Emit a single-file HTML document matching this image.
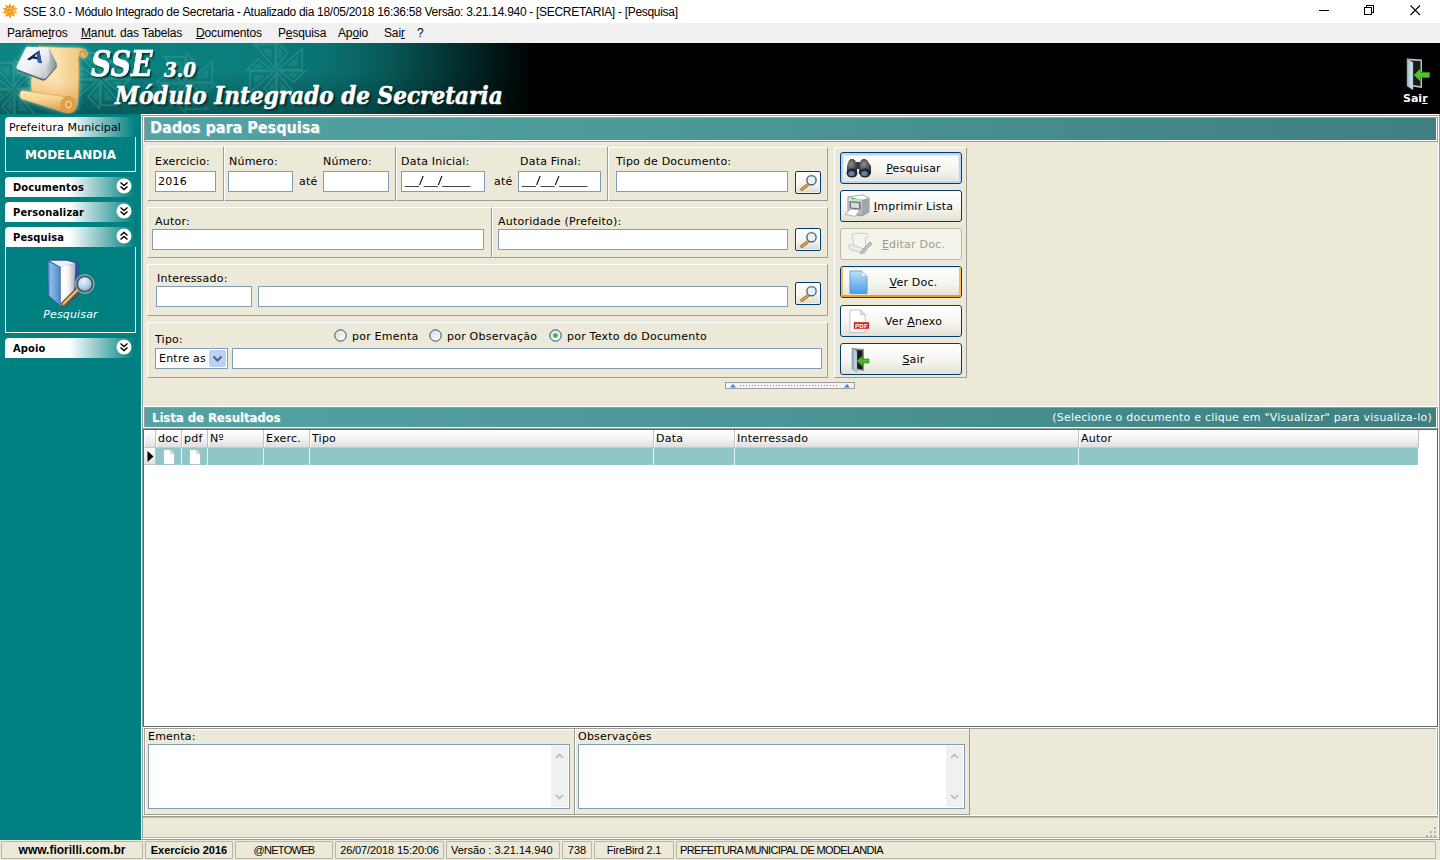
<!DOCTYPE html>
<html lang="pt-BR">
<head>
<meta charset="utf-8">
<title>SSE 3.0 - Módulo Integrado de Secretaria</title>
<style>
*{box-sizing:border-box;margin:0;padding:0}
html,body{width:1440px;height:860px;overflow:hidden;background:#fff}
body{position:relative;font-family:"DejaVu Sans","Liberation Sans",sans-serif;font-size:11px;color:#000}
.abs,.abs>*{position:absolute}
#app{position:absolute;left:0;top:0;width:1440px;height:860px;overflow:hidden}
#app div,#app span,#app svg,#app u{position:absolute;white-space:pre}
#app u{position:static;text-decoration:underline;text-underline-offset:1px}
/* title bar */
#titlebar{left:0;top:0;width:1440px;height:23px;background:#fff}
#titletext{left:23px;top:5px;font:12px/15px "Liberation Sans",sans-serif;letter-spacing:-.3px;color:#000}
/* menu */
#menubar{left:0;top:23px;width:1440px;height:20px;background:#f0f0f0}
#menubar span{top:3px;font:12px/15px "Liberation Sans",sans-serif;letter-spacing:-.15px}
/* header */
#header{left:0;top:43px;width:1440px;height:71px;background:linear-gradient(180deg,rgba(0,0,0,0) 40%,rgba(0,0,0,.3) 100%),linear-gradient(90deg,#0c8583 0px,#0a7e7c 240px,#0a7270 325px,#085a59 385px,#053a3a 438px,#021b1b 488px,#000 535px)}
.hshadow{text-shadow:2px 2px 2px rgba(0,30,30,.85)}
/* sidebar */
#sidebar{left:0;top:114px;width:141px;height:726px;background:#008080}
.sbh{left:5px;width:131px;height:20px;border-radius:4px 0 0 0;background:linear-gradient(90deg,#fff 0,#fff 64px,#008080 130px);font:bold 11px/20px "DejaVu Sans Condensed","DejaVu Sans",sans-serif}
.sbh b{position:absolute;left:8px;top:1px;font-weight:bold;letter-spacing:.15px}
.sbb{left:5px;width:131px;border:1px solid #fff;border-top:none;background:#008080}
/* main */
#main{left:141px;top:114px;width:1299px;height:726px;background:#ece9d8}
.bar{background:linear-gradient(90deg,#53a3a3 0,#4c9999 40%,#3f7f7f 100%);color:#fff}
.grp{border:1px solid;border-color:#fff #9c9c98 #9c9c98 #fff}
.vsep{width:2px;border-left:1px solid #9c9c98;border-right:1px solid #fff}
.in{background:#fff;border:1px solid #7f9db9;height:21px}
.lbl{font-size:11px;line-height:14px;letter-spacing:.22px}
.sbtn{width:26px;height:23px;border:1px solid #003c74;border-radius:2px;background:linear-gradient(#fff,#f4f3ee 60%,#dcd9cc);box-shadow:inset 0 0 0 1px rgba(255,255,255,.6)}
.btn{left:699px;width:122px;height:32px;border:1px solid #003c74;border-radius:3px;background:linear-gradient(#fff 0,#f6f5f0 55%,#e3e0d3 100%);font-size:11px;line-height:32px;letter-spacing:.22px}
.btn .t{left:0;top:0;height:30px}
/* status */
#status{left:0;top:840px;width:1440px;height:20px;background:#ece9d8}
.sp{top:1px;height:18px;border:1px solid #b9b6a6;border-radius:1px;font:11px/16px "Liberation Sans",sans-serif;text-align:center}
</style>
</head>
<body>
<div id="app">

<!-- TITLE BAR -->
<div id="titlebar">
  <svg id="appicon" style="left:2px;top:3px" width="16" height="16" viewBox="0 0 16 16"><path d="M8 .3l1.300 3.100 3.300-2-.7 3.500 3.800.2-2.900 2.400 2.800 2.300-3.600.5.900 3.500-3.200-1.700L8 15.700l-1.500-3.300-3.300 1.600.8-3.500-3.600-.5 2.800-2.400L.4 5.300l3.600-.4-.8-3.500 3.200 1.800z" fill="#f39c12"/><g fill="#fff" opacity=".85"><circle cx="5.800" cy="5.600" r=".7"/><circle cx="8.600" cy="5.200" r=".6"/><circle cx="4.600" cy="8" r=".6"/><circle cx="7.600" cy="8.600" r=".8"/><circle cx="5.200" cy="10.600" r=".6"/><circle cx="8.200" cy="11.400" r=".5"/></g><path d="M9.500 6.500l4.500-3-1.200 4.800 1.800 1.500-3.500 1.200z" fill="#f8b552"/></svg>
  <span id="titletext">SSE 3.0 - Módulo Integrado de Secretaria - Atualizado dia 18/05/2018 16:36:58 Versão: 3.21.14.940 - [SECRETARIA] - [Pesquisa]</span>
  <svg style="left:1300px;top:0" width="140" height="23" viewBox="0 0 140 23"><g stroke="#000" stroke-width="1" fill="none" shape-rendering="crispEdges"><path d="M19 10.500h10"/><path d="M64.500 7.500h7v7h-7z"/><path d="M66.500 7.500v-2h7v7h-2"/></g><path d="M110.500 5.500l9.500 9.500M120 5.500l-9.500 9.500" stroke="#000" stroke-width="1.100" fill="none"/></svg>
</div>

<!-- MENU BAR -->
<div id="menubar">
  <span style="left:7px">Parâme<u>t</u>ros</span>
  <span style="left:81px"><u>M</u>anut. das Tabelas</span>
  <span style="left:196px"><u>D</u>ocumentos</span>
  <span style="left:278px">P<u>e</u>squisa</span>
  <span style="left:338px">Ap<u>o</u>io</span>
  <span style="left:384px">Sai<u>r</u></span>
  <span style="left:417px">?</span>
</div>

<!-- HEADER -->
<div id="header">
  <svg id="orn" style="left:0;top:0" width="620" height="71" viewBox="0 0 620 71">
    <defs><g id="star"><path d="M-0.8 -1.8L-0.8 -26.1L-21.5 -26.1z" fill="none" stroke="#a5ebe4" stroke-width="1.700"/><path d="M-4.4 -10.4L-4.4 -21.8L-14.1 -21.8z" fill="#a5ebe4" opacity=".7"/><path d="M-29.6 -0.4L-17.9 -11.7L-3.5 -0.4z" fill="none" stroke="#a5ebe4" stroke-width="1.700"/><path d="M-22.9 -2.4L-17.4 -7.7L-10.7 -2.4z" fill="#a5ebe4" opacity=".7"/><path d="M1.8 -0.8L26.1 -0.8L26.1 -21.5z" fill="none" stroke="#a5ebe4" stroke-width="1.700"/><path d="M10.4 -4.4L21.8 -4.4L21.8 -14.1z" fill="#a5ebe4" opacity=".7"/><path d="M0.4 -29.6L11.7 -17.9L0.4 -3.5z" fill="none" stroke="#a5ebe4" stroke-width="1.700"/><path d="M2.4 -22.9L7.7 -17.4L2.4 -10.7z" fill="#a5ebe4" opacity=".7"/><path d="M0.8 1.8L0.8 26.1L21.5 26.1z" fill="none" stroke="#a5ebe4" stroke-width="1.700"/><path d="M4.4 10.4L4.4 21.8L14.1 21.8z" fill="#a5ebe4" opacity=".7"/><path d="M29.6 0.4L17.9 11.7L3.5 0.4z" fill="none" stroke="#a5ebe4" stroke-width="1.700"/><path d="M22.9 2.4L17.4 7.7L10.7 2.4z" fill="#a5ebe4" opacity=".7"/><path d="M-1.8 0.8L-26.1 0.8L-26.1 21.5z" fill="none" stroke="#a5ebe4" stroke-width="1.700"/><path d="M-10.4 4.4L-21.8 4.4L-21.8 14.1z" fill="#a5ebe4" opacity=".7"/><path d="M-0.4 29.6L-11.7 17.9L-0.4 3.5z" fill="none" stroke="#a5ebe4" stroke-width="1.700"/><path d="M-2.4 22.9L-7.7 17.4L-2.4 10.7z" fill="#a5ebe4" opacity=".7"/></g></defs>
    <use href="#star" x="14" y="46" opacity=".16"/>
    <use href="#star" x="100" y="36" opacity=".17"/>
    <use href="#star" x="186" y="40" opacity=".13"/>
    <use href="#star" x="276" y="27.500" opacity=".15"/>
  </svg>
  <svg id="logo" style="left:0;top:0;filter:drop-shadow(0 0 2.500px rgba(190,255,245,.55))" width="100" height="71" viewBox="0 0 100 71">
    <defs>
      <linearGradient id="pg" x1="0" y1="0" x2="1" y2="0"><stop offset="0" stop-color="#f7d79c"/><stop offset=".45" stop-color="#fbe2b0"/><stop offset=".8" stop-color="#f4cb88"/><stop offset="1" stop-color="#e4ab5c"/></linearGradient>
      <linearGradient id="pgb" x1="0" y1="0" x2="0" y2="1"><stop offset="0" stop-color="#f0b86a" stop-opacity="0"/><stop offset=".6" stop-color="#eeb162" stop-opacity="0"/><stop offset="1" stop-color="#e39a45" stop-opacity=".75"/></linearGradient>
      <linearGradient id="pg2" x1="0" y1="0" x2=".25" y2="1"><stop offset="0" stop-color="#fdeabc"/><stop offset=".5" stop-color="#f8d08c"/><stop offset="1" stop-color="#dca052"/></linearGradient>
      <linearGradient id="kg" x1="0" y1="0" x2="1" y2=".8"><stop offset="0" stop-color="#ffffff"/><stop offset=".5" stop-color="#eef1f6"/><stop offset=".8" stop-color="#cfd4dc"/><stop offset="1" stop-color="#8f959e"/></linearGradient>
      <linearGradient id="kg2" x1="0" y1="0" x2="1" y2="0"><stop offset="0" stop-color="#d9dde3"/><stop offset="1" stop-color="#777d86"/></linearGradient>
    </defs>
    <!-- sheet -->
    <path d="M38 3.500L78 5C84 5 89 8 87.500 12.500C86 16 81 15.500 80 12L78.500 14C79.500 28 79 44 77.500 62L31.500 48C30.500 41 31 34 32 26z" fill="url(#pg)" stroke="#d6a55c" stroke-width=".7"/>
    <path d="M38 3.500L78 5C84 5 89 8 87.500 12.500C86 16 81 15.500 80 12L78.500 14C79.500 28 79 44 77.500 62L31.500 48C30.500 41 31 34 32 26z" fill="url(#pgb)"/>
    <path d="M80 12c-.6-2.600 1.500-4.300 3.800-3.700c2 .6 2.400 3 .8 4.200" fill="none" stroke="#d08e38" stroke-width="1.300"/>
    <!-- roll -->
    <path d="M22.500 47.500C19.500 48 18.800 54 21.500 56L65 69.500C72 71.500 77.500 67 77 61C76.600 57 73 54.800 69 54.300z" fill="url(#pg2)" stroke="#d6a55c" stroke-width=".7"/>
    <ellipse cx="68.500" cy="61.500" rx="7.300" ry="7.800" fill="#e8a850" stroke="#c98632" stroke-width=".8"/>
    <ellipse cx="68.500" cy="61.500" rx="4.600" ry="5" fill="#f2c47c" stroke="#d08e38" stroke-width="1.100"/>
    <ellipse cx="68.500" cy="61.500" rx="1.800" ry="2" fill="#d8943c"/>
    <!-- key -->
    <path d="M28 5.500L47 6.500C48.500 6.600 49.300 7.200 50 8.500L56.500 21.500C57.200 23 57 24 56 25.300L46 36.500C45 37.600 43.800 37.900 42.300 37.400L18.500 28.500C16.500 27.700 16 26 17 24.300L25.500 7C26 6 26.800 5.500 28 5.500z" fill="#5d636b"/>
    <path d="M28 3.800L47 4.800C48.500 4.900 49.300 5.500 50 6.800L56.500 19.800C57.200 21.300 57 22.300 56 23.600L46 34.800C45 35.900 43.800 36.200 42.300 35.700L18.500 26.800C16.500 26 16 24.300 17 22.600L25.500 5.300C26 4.300 26.800 3.800 28 3.800z" fill="url(#kg)"/>
    <path d="M48.500 5.500C49.200 5.800 49.600 6.200 50 6.800L56.500 19.800C57.200 21.300 57 22.300 56 23.600L46 34.800C45.500 35.300 45 35.600 44.500 35.800C44 32 45.500 24 49 19.500C50 15 49.500 9 48.500 5.500z" fill="url(#kg2)" opacity=".85"/>
    <path d="M26.800 16.500L39.300 7.200L41.800 20.300L38 19.300L37.500 16.300L32.300 15.600L30 17.300zM34.500 13.600L37.200 14L36.600 10.800z" fill="#151d40"/>
    <path d="M39.300 7.200L41.800 20.300L38 19.300L37.500 16.300L37.200 14L36.600 10.800z" fill="#2f56b0"/>
  </svg>
  <span class="hshadow" id="h1" style="left:91px;top:-2px;-webkit-text-stroke:.7px #fff;font:italic bold 36px/44px 'DejaVu Serif Condensed','DejaVu Serif','Liberation Serif',serif;color:#fff;transform:scaleX(.87);transform-origin:0 0">SSE</span>
  <span class="hshadow" id="h2" style="left:164px;top:14px;-webkit-text-stroke:.5px #fff;font:italic bold 20.500px/26px 'DejaVu Serif Condensed','DejaVu Serif','Liberation Serif',serif;color:#fff">3.0</span>
  <span class="hshadow" id="h3" style="left:115px;top:38px;-webkit-text-stroke:.5px #fff;font:italic bold 24px/30px 'DejaVu Serif Condensed','DejaVu Serif','Liberation Serif',serif;color:#fff">Módulo Integrado de Secretaria</span>
  <svg id="door" style="left:1403px;top:14px" width="30" height="34" viewBox="0 0 30 34">
    <defs><linearGradient id="dg" x1="0" y1="0" x2="1" y2="0"><stop offset="0" stop-color="#9db8cc"/><stop offset="1" stop-color="#dfe9f0"/></linearGradient></defs>
    <path d="M4 1.500L19 2.500V31L4 29z" fill="#b9bec2"/>
    <path d="M6 3.500L17.500 4V29L6 27.500z" fill="#1a1a1a"/>
    <path d="M4 1.500L10 5.500V33L4 29z" fill="url(#dg)" stroke="#6f879a" stroke-width=".6"/>
    <path d="M11 18L17.500 11.500V15.500H26.500V20.500H17.500V24.500z" fill="#4fc32a" stroke="#2f8f17" stroke-width=".8"/>
  </svg>
  <span id="hsair" style="left:1403px;top:49px;font:bold 11px/14px 'DejaVu Sans',sans-serif;color:#fff">Sai<u>r</u></span>
</div>

<!-- SIDEBAR -->
<div id="sidebar">
  <div class="sbh" style="top:3px;font-weight:normal;font-family:'DejaVu Sans',sans-serif"><b style="left:4px;font-weight:normal;letter-spacing:.12px">Prefeitura Municipal</b></div>
  <div class="sbb" style="top:23px;height:35px"><span style="left:0;top:0;width:129px;text-align:center;font:bold 12px/36px 'DejaVu Sans',sans-serif;color:#fff">MODELANDIA</span></div>
  <div class="sbh" style="top:63px"><b>Documentos</b><svg style="left:110.500px;top:1px" width="16" height="16" viewBox="0 0 16 16"><circle cx="8" cy="8" r="7.500" fill="#fff"/><path d="M4.500 4.500L8 7.500L11.500 4.500M4.500 8.500L8 11.500L11.500 8.500" fill="none" stroke="#000" stroke-width="1.400"/></svg></div>
  <div class="sbh" style="top:88px"><b>Personalizar</b><svg style="left:110.500px;top:1px" width="16" height="16" viewBox="0 0 16 16"><circle cx="8" cy="8" r="7.500" fill="#fff"/><path d="M4.500 4.500L8 7.500L11.500 4.500M4.500 8.500L8 11.500L11.500 8.500" fill="none" stroke="#000" stroke-width="1.400"/></svg></div>
  <div class="sbh" style="top:113px"><b>Pesquisa</b><svg style="left:110.500px;top:1px" width="16" height="16" viewBox="0 0 16 16"><circle cx="8" cy="8" r="7.500" fill="#fff"/><path d="M4.500 7.500L8 4.500L11.500 7.500M4.500 11.500L8 8.500L11.500 11.500" fill="none" stroke="#000" stroke-width="1.400"/></svg></div>
  <div class="sbb" style="top:133px;height:86px">
    <svg id="bookicon" style="left:40px;top:12px" width="52" height="50" viewBox="0 0 52 50">
      <defs>
        <linearGradient id="bk1" x1="0" y1="0" x2="1" y2="0"><stop offset="0" stop-color="#3d74b6"/><stop offset=".25" stop-color="#8dbbe8"/><stop offset="1" stop-color="#4f88c6"/></linearGradient>
        <linearGradient id="bk2" x1="0" y1="0" x2="1" y2="0"><stop offset="0" stop-color="#ffffff"/><stop offset=".55" stop-color="#f1f2f4"/><stop offset="1" stop-color="#a9adb3"/></linearGradient>
        <radialGradient id="lens" cx=".4" cy=".3" r=".75"><stop offset="0" stop-color="#eaf7fd"/><stop offset=".6" stop-color="#a7d2ea"/><stop offset="1" stop-color="#5d9cc4"/></radialGradient>
      </defs>
      <path d="M2.400 .5L22 .3L33.800 3.600L32.500 37.500L14 47L2.400 36z" fill="#27579a"/>
      <path d="M3.500 1.800L21 1.800L29.400 4.200L14.300 8z" fill="#eef2f7"/>
      <path d="M14.300 8L29.400 4.200L28 36.500L14.300 47z" fill="url(#bk2)"/>
      <path d="M14.300 8L21 6.300L20.300 43L14.300 47z" fill="#fff"/>
      <path d="M1.500 1.700L14.300 8L14.300 47L2.400 36.300z" fill="url(#bk1)" stroke="#2a5c9e" stroke-width=".7"/>
      <path d="M17.400 45L31.500 31" stroke="#6b4414" stroke-width="5.200" stroke-linecap="round"/>
      <path d="M17.400 45L31.500 31" stroke="#dba450" stroke-width="3" stroke-linecap="round"/>
      <path d="M18 44L31 31" stroke="#f4d9a0" stroke-width=".9" stroke-linecap="round"/>
      <circle cx="38.800" cy="25" r="7.900" fill="url(#lens)" stroke="#565b61" stroke-width="2.300"/>
      <circle cx="38.800" cy="25" r="9.300" fill="none" stroke="#c8ccd0" stroke-width=".9"/>
    </svg>
    <span style="left:0;top:61px;width:129px;text-align:center;font:italic 11px/14px 'DejaVu Sans',sans-serif;color:#fff;letter-spacing:.15px">Pesquisar</span>
  </div>
  <div class="sbh" style="top:224px"><b>Apoio</b><svg style="left:110.500px;top:1px" width="16" height="16" viewBox="0 0 16 16"><circle cx="8" cy="8" r="7.500" fill="#fff"/><path d="M4.500 4.500L8 7.500L11.500 4.500M4.500 8.500L8 11.500L11.500 8.500" fill="none" stroke="#000" stroke-width="1.400"/></svg></div>
</div>

<!-- MAIN -->
<div id="main">
  <!--MAIN-START-->
  <div style="left:0px;top:0px;width:1299px;height:1px;background:#fff"></div>
  <div style="left:1px;top:1px;width:1297px;height:1px;background:#9c9c9c"></div>
  <div style="left:0px;top:0px;width:1px;height:726px;background:#fff"></div>
  <div style="left:1px;top:1px;width:1px;height:724px;background:#9c9c9c"></div>
  <div style="left:1297px;top:2px;width:1px;height:723px;background:#fff"></div>
  <div style="left:1298px;top:0px;width:1px;height:726px;background:#9c9c9c"></div>
  <div style="left:2px;top:2px;width:1295px;height:1px;background:#fff"></div>
  <div style="left:3px;top:3px;width:1293px;height:1px;background:#9c9c9c"></div>
  <div style="left:2px;top:2px;width:1px;height:26px;background:#fff"></div>
  <div style="left:3px;top:3px;width:1px;height:24px;background:#9c9c9c"></div>
  <div style="left:1295px;top:4px;width:1px;height:23px;background:#fff"></div>
  <div style="left:1296px;top:3px;width:1px;height:25px;background:#9c9c9c"></div>
  <div style="left:4px;top:26px;width:1292px;height:1px;background:#fff"></div>
  <div style="left:3px;top:27px;width:1294px;height:1px;background:#9c9c9c"></div>
  <div class="bar" style="left:4px;top:4px;width:1291px;height:22px;"><span style="left:5px;top:-1px;font:bold 16px/21px 'DejaVu Sans Condensed','DejaVu Sans',sans-serif;color:#fff;text-shadow:1px 1px 0 rgba(255,255,255,.25)">Dados para Pesquisa</span></div>
  <div class="grp" style="left:6px;top:32px;width:77px;height:55px;"></div>
  <div class="grp" style="left:83px;top:32px;width:172px;height:55px;"></div>
  <div class="grp" style="left:255px;top:32px;width:212px;height:55px;"></div>
  <div class="grp" style="left:467px;top:33px;width:220px;height:54px;"></div>
  <div class="grp" style="left:6px;top:93px;width:345px;height:51px;"></div>
  <div class="grp" style="left:351px;top:93px;width:336px;height:51px;"></div>
  <div class="grp" style="left:6px;top:150px;width:681px;height:52px;"></div>
  <div class="grp" style="left:6px;top:208px;width:681px;height:56px;"></div>
  <div class="grp" style="left:693px;top:33px;width:133px;height:231px;"></div>
  <span class="lbl" style="left:14px;top:41px;">Exercicio:</span>
  <span class="lbl" style="left:88px;top:41px;">Número:</span>
  <span class="lbl" style="left:182px;top:41px;">Número:</span>
  <span class="lbl" style="left:260px;top:41px;">Data Inicial:</span>
  <span class="lbl" style="left:379px;top:41px;">Data Final:</span>
  <span class="lbl" style="left:475px;top:41px;">Tipo de Documento:</span>
  <span class="lbl" style="left:158px;top:61px;">até</span>
  <span class="lbl" style="left:353px;top:61px;">até</span>
  <div class="in" style="left:14px;top:57px;width:61px;height:21px;"><span class="lbl" style="left:2px;top:3px">2016</span></div>
  <div class="in" style="left:87px;top:57px;width:65px;height:21px;"></div>
  <div class="in" style="left:182px;top:57px;width:66px;height:21px;"></div>
  <div class="in" style="left:260px;top:57px;width:84px;height:21px;"><span class="lbl" style="left:3px;top:2px;letter-spacing:0;transform:scaleX(1.27);transform-origin:0 0">__/__/____</span></div>
  <div class="in" style="left:377px;top:57px;width:83px;height:21px;"><span class="lbl" style="left:3px;top:2px;letter-spacing:0;transform:scaleX(1.27);transform-origin:0 0">__/__/____</span></div>
  <div class="in" style="left:475px;top:57px;width:172px;height:21px;"></div>
  <div class="sbtn" style="left:654px;top:57px;width:26px;height:23px;"><svg style="left:4px;top:2px" width="18" height="18" viewBox="0 0 18 18"><path d="M2 15.300L7.800 10.800" stroke="#8a5a1c" stroke-width="3.200" stroke-linecap="round"/><path d="M2 15.300L7.800 10.800" stroke="#e0a652" stroke-width="1.800" stroke-linecap="round"/><circle cx="11.500" cy="6.300" r="4.700" fill="#e6f3fd" stroke="#4a4f56" stroke-width="1.400"/><circle cx="11.500" cy="6.300" r="5.500" fill="none" stroke="#c9ced3" stroke-width=".6"/></svg></div>
  <span class="lbl" style="left:14px;top:101px;">Autor:</span>
  <span class="lbl" style="left:357px;top:101px;">Autoridade (Prefeito):</span>
  <div class="in" style="left:11px;top:115px;width:332px;height:21px;"></div>
  <div class="in" style="left:357px;top:115px;width:290px;height:21px;"></div>
  <div class="sbtn" style="left:654px;top:114px;width:26px;height:23px;"><svg style="left:4px;top:2px" width="18" height="18" viewBox="0 0 18 18"><path d="M2 15.300L7.800 10.800" stroke="#8a5a1c" stroke-width="3.200" stroke-linecap="round"/><path d="M2 15.300L7.800 10.800" stroke="#e0a652" stroke-width="1.800" stroke-linecap="round"/><circle cx="11.500" cy="6.300" r="4.700" fill="#e6f3fd" stroke="#4a4f56" stroke-width="1.400"/><circle cx="11.500" cy="6.300" r="5.500" fill="none" stroke="#c9ced3" stroke-width=".6"/></svg></div>
  <span class="lbl" style="left:16px;top:158px;">Interessado:</span>
  <div class="in" style="left:15px;top:172px;width:96px;height:21px;"></div>
  <div class="in" style="left:117px;top:172px;width:530px;height:21px;"></div>
  <div class="sbtn" style="left:654px;top:168px;width:26px;height:23px;"><svg style="left:4px;top:2px" width="18" height="18" viewBox="0 0 18 18"><path d="M2 15.300L7.800 10.800" stroke="#8a5a1c" stroke-width="3.200" stroke-linecap="round"/><path d="M2 15.300L7.800 10.800" stroke="#e0a652" stroke-width="1.800" stroke-linecap="round"/><circle cx="11.500" cy="6.300" r="4.700" fill="#e6f3fd" stroke="#4a4f56" stroke-width="1.400"/><circle cx="11.500" cy="6.300" r="5.500" fill="none" stroke="#c9ced3" stroke-width=".6"/></svg></div>
  <span class="lbl" style="left:14px;top:219px;">Tipo:</span>
  <svg style="left:193px;top:215px" width="13" height="13" viewBox="0 0 13 13"><defs><linearGradient id="rg334" x1="0" y1="0" x2="1" y2="1"><stop offset="0" stop-color="#dcdcd7"/><stop offset="1" stop-color="#fff"/></linearGradient></defs><circle cx="6.500" cy="6.500" r="5.700" fill="url(#rg334)" stroke="#21507b" stroke-width="1"/></svg>
  <span class="lbl" style="left:211px;top:216px;">por Ementa</span>
  <svg style="left:288px;top:215px" width="13" height="13" viewBox="0 0 13 13"><defs><linearGradient id="rg429" x1="0" y1="0" x2="1" y2="1"><stop offset="0" stop-color="#dcdcd7"/><stop offset="1" stop-color="#fff"/></linearGradient></defs><circle cx="6.500" cy="6.500" r="5.700" fill="url(#rg429)" stroke="#21507b" stroke-width="1"/></svg>
  <span class="lbl" style="left:306px;top:216px;">por Observação</span>
  <svg style="left:408px;top:215px" width="13" height="13" viewBox="0 0 13 13"><defs><linearGradient id="rg549" x1="0" y1="0" x2="1" y2="1"><stop offset="0" stop-color="#dcdcd7"/><stop offset="1" stop-color="#fff"/></linearGradient></defs><circle cx="6.500" cy="6.500" r="5.700" fill="url(#rg549)" stroke="#21507b" stroke-width="1"/><circle cx="6.500" cy="6.500" r="2.300" fill="#3fb13a"/></svg>
  <span class="lbl" style="left:426px;top:216px;">por Texto do Documento</span>
  <div class="in" style="left:14px;top:234px;width:73px;height:21px;"><span class="lbl" style="left:3px;top:3px">Entre as</span><div style="left:53px;top:1px;width:17px;height:17px;background:#bcd0f2;border-radius:2px"><svg style="left:3px;top:5px" width="11" height="8" viewBox="0 0 11 8"><path d="M1.500 1.500L5.500 5.500L9.500 1.500" fill="none" stroke="#4d6185" stroke-width="2"/></svg></div></div>
  <div class="in" style="left:91px;top:234px;width:590px;height:21px;"></div>
  <div class="btn" style="left:699px;top:38px;width:122px;height:32px;box-shadow:inset 0 0 0 2px #bcd3f5,inset 0 0 0 3px #e6eefc;"><svg style="left:4px;top:3px" width="28" height="24" viewBox="0 0 28 24"><defs><radialGradient id="bn1" cx=".4" cy=".3" r=".8"><stop offset="0" stop-color="#8a8f94"/><stop offset="1" stop-color="#1d2024"/></radialGradient></defs><path d="M4 4h6l2 5v9H2V10z" fill="url(#bn1)"/><path d="M16 4h6l4 6v8H14V9z" fill="url(#bn1)"/><rect x="11" y="6" width="4" height="7" fill="#3a3d41"/><ellipse cx="7" cy="17" rx="5.500" ry="4.500" fill="#23272c"/><ellipse cx="20" cy="17" rx="5.500" ry="4.500" fill="#23272c"/><ellipse cx="6.500" cy="17.500" rx="3.200" ry="2.600" fill="#5b7fae"/><ellipse cx="19.500" cy="17.500" rx="3.200" ry="2.600" fill="#5b7fae"/><path d="M5 3h4v2H5zM17 3h4v2h-4z" fill="#6a5a48"/></svg><span class="t" style="left:24px;width:97px;text-align:center;color:#000"><u>P</u>esquisar</span></div>
  <div class="btn" style="left:699px;top:76px;width:122px;height:32px;"><svg style="left:2px;top:3px" width="28" height="26" viewBox="0 0 28 26"><defs><linearGradient id="pr1" x1="0" y1="0" x2="1" y2="1"><stop offset="0" stop-color="#f4f5f6"/><stop offset="1" stop-color="#9a9ea3"/></linearGradient></defs><path d="M5 3L20 1l6 3v14l-7 4L5 19z" fill="url(#pr1)" stroke="#7b7f84" stroke-width=".8"/><path d="M19 6l7-2v14l-7 4z" fill="#a3a7ab"/><path d="M19 6l7-2L20 1L5 3z" fill="#fafafa" stroke="#9a9ea3" stroke-width=".5"/><path d="M6.500 7l11 .9v7.600L6.500 14.500z" fill="#6f7378"/><path d="M8 8.500l8 .7v5L8 13.500z" fill="#d9dcdf"/><path d="M2 20l6-5 9 1-5 6.500z" fill="#fff" stroke="#8d9196" stroke-width=".7"/><rect x="8" y="4" width="4" height="1.200" fill="#3cc23c"/></svg><span class="t" style="left:24px;width:97px;text-align:center;color:#000"><u>I</u>mprimir Lista</span></div>
  <div class="btn" style="left:699px;top:114px;width:122px;height:32px;border-color:#bab89f;background:#f5f4ea;"><svg style="left:5px;top:3px" width="28" height="26" viewBox="0 0 28 26" opacity=".9"><path d="M6 2c5-1 10-1 15 0 2 .4 2 3 0 3l-1 0c-1 4 0 8-1 13L7 16c1-4 0-9-1-14z" fill="#f4f4f4" stroke="#bcbcbc" stroke-width=".8"/><path d="M3 15c-1-2 1-3 3-2l12 4c3 1 3 4 0 4.500L6 18c-2-.5-2.500-1.500-3-3z" fill="#ececec" stroke="#b4b4b4" stroke-width=".8"/><path d="M14 22l2-4 8-8 2 2-8 8z" fill="#b9b9b9" stroke="#9a9a9a" stroke-width=".7"/></svg><span class="t" style="left:24px;width:97px;text-align:center;color:#9d9b93"><u>E</u>ditar Doc.</span></div>
  <div class="btn" style="left:699px;top:152px;width:122px;height:32px;"><div style="left:0;top:0;right:0;bottom:0;border:2px solid;border-color:#fde3a8 #f9bd55 #f19d12 #f9bd55;border-top-width:1px;border-radius:2px"></div><svg style="left:8px;top:3px" width="19" height="24.500" viewBox="0 0 20 26" preserveAspectRatio="none"><defs><linearGradient id="dc1" x1="0" y1="0" x2="0" y2="1"><stop offset="0" stop-color="#bfe0fa"/><stop offset="1" stop-color="#4a9de6"/></linearGradient></defs><path d="M1 1h12l6 6v18H1z" fill="url(#dc1)" stroke="#4c8fd0" stroke-width=".8"/><path d="M13 1l6 6h-6z" fill="#eaf5ff" stroke="#7fb3e6" stroke-width=".6"/></svg><span class="t" style="left:24px;width:97px;text-align:center;color:#000"><u>V</u>er Doc.</span></div>
  <div class="btn" style="left:699px;top:191px;width:122px;height:32px;"><svg style="left:8px;top:3px" width="21" height="24.500" viewBox="0 0 22 26" preserveAspectRatio="none"><path d="M1 1h11l5 5v19H1z" fill="#fff" stroke="#b4b4b4" stroke-width=".8"/><path d="M12 1l5 5h-5z" fill="#e6e6e6" stroke="#b4b4b4" stroke-width=".6"/><rect x="5" y="14" width="16" height="7" fill="#d42020"/><text x="13" y="20" text-anchor="middle" font-family="Liberation Sans,sans-serif" font-weight="bold" font-size="6.500" fill="#fff">PDF</text></svg><span class="t" style="left:24px;width:97px;text-align:center;color:#000">Ver <u>A</u>nexo</span></div>
  <div class="btn" style="left:699px;top:229px;width:122px;height:32px;"><svg style="left:9px;top:3px" width="22" height="26" viewBox="0 0 22 26"><defs><linearGradient id="ex1" x1="0" y1="0" x2="1" y2="0"><stop offset="0" stop-color="#8aa9c0"/><stop offset="1" stop-color="#d5e2ec"/></linearGradient></defs><path d="M2 1l12 1v22L2 22z" fill="#8c9094"/><path d="M4 3l8.500.6v19L4 21z" fill="#1b1b1b"/><path d="M2 1l5 3v21l-5-3z" fill="url(#ex1)" stroke="#66808f" stroke-width=".5"/><path d="M7 14l5-5v3h7v4h-7v3z" fill="#48bd28" stroke="#2b8a15" stroke-width=".7"/></svg><span class="t" style="left:24px;width:97px;text-align:center;color:#000"><u>S</u>air</span></div>
  <div style="left:584px;top:268px;width:130px;height:7px;border:1px solid #9d9d9d;background:#f3f3f3"><svg style="left:0;top:0" width="128" height="5" viewBox="0 0 128 5"><path d="M4 4.500L7 1l3 3.500zM118 4.500L121 1l3 3.500z" fill="#2f86f2"/><rect x="14" y="2" width="1" height="1" fill="#3c8cf0"/><rect x="17" y="2" width="1" height="1" fill="#3c8cf0"/><rect x="20" y="2" width="1" height="1" fill="#3c8cf0"/><rect x="23" y="2" width="1" height="1" fill="#3c8cf0"/><rect x="26" y="2" width="1" height="1" fill="#3c8cf0"/><rect x="29" y="2" width="1" height="1" fill="#3c8cf0"/><rect x="32" y="2" width="1" height="1" fill="#3c8cf0"/><rect x="35" y="2" width="1" height="1" fill="#3c8cf0"/><rect x="38" y="2" width="1" height="1" fill="#3c8cf0"/><rect x="41" y="2" width="1" height="1" fill="#3c8cf0"/><rect x="44" y="2" width="1" height="1" fill="#3c8cf0"/><rect x="47" y="2" width="1" height="1" fill="#3c8cf0"/><rect x="50" y="2" width="1" height="1" fill="#3c8cf0"/><rect x="53" y="2" width="1" height="1" fill="#3c8cf0"/><rect x="56" y="2" width="1" height="1" fill="#3c8cf0"/><rect x="59" y="2" width="1" height="1" fill="#3c8cf0"/><rect x="62" y="2" width="1" height="1" fill="#3c8cf0"/><rect x="65" y="2" width="1" height="1" fill="#3c8cf0"/><rect x="68" y="2" width="1" height="1" fill="#3c8cf0"/><rect x="71" y="2" width="1" height="1" fill="#3c8cf0"/><rect x="74" y="2" width="1" height="1" fill="#3c8cf0"/><rect x="77" y="2" width="1" height="1" fill="#3c8cf0"/><rect x="80" y="2" width="1" height="1" fill="#3c8cf0"/><rect x="83" y="2" width="1" height="1" fill="#3c8cf0"/><rect x="86" y="2" width="1" height="1" fill="#3c8cf0"/><rect x="89" y="2" width="1" height="1" fill="#3c8cf0"/><rect x="92" y="2" width="1" height="1" fill="#3c8cf0"/><rect x="95" y="2" width="1" height="1" fill="#3c8cf0"/><rect x="98" y="2" width="1" height="1" fill="#3c8cf0"/><rect x="101" y="2" width="1" height="1" fill="#3c8cf0"/><rect x="104" y="2" width="1" height="1" fill="#3c8cf0"/><rect x="107" y="2" width="1" height="1" fill="#3c8cf0"/><rect x="110" y="2" width="1" height="1" fill="#3c8cf0"/></svg></div>
  <div style="left:2px;top:292px;width:1295px;height:1px;background:#fff"></div>
  <div style="left:3px;top:293px;width:1293px;height:1px;background:#9c9c9c"></div>
  <div style="left:2px;top:292px;width:1px;height:22px;background:#fff"></div>
  <div style="left:3px;top:293px;width:1px;height:20px;background:#9c9c9c"></div>
  <div style="left:1295px;top:294px;width:1px;height:20px;background:#fff"></div>
  <div style="left:1296px;top:293px;width:1px;height:21px;background:#9c9c9c"></div>
  <div style="left:4px;top:313px;width:1292px;height:1px;background:#fff"></div>
  <div class="bar" style="left:4px;top:294px;width:1291px;height:19px;"><span style="left:7px;top:0;font:bold 13px/19px 'DejaVu Sans Condensed','DejaVu Sans',sans-serif;letter-spacing:-.05px;color:#fff;text-shadow:1px 1px 0 rgba(255,255,255,.2)">Lista de Resultados</span><span class="lbl" style="right:4px;top:3px;color:#eaffff">(Selecione o documento e clique em "Visualizar" para visualiza-lo)</span></div>
  <div style="left:1px;top:314px;width:1297px;height:300px;background:#fff;border:1px solid #9a9a9a;border-right-color:#fff;border-bottom-color:#fff"></div>
  <div style="left:2px;top:315px;width:1295px;height:298px;background:#fff;border:1px solid #646464"></div>
  <div style="left:3px;top:316px;width:12px;height:18px;background:linear-gradient(#fff 0,#f6f6f6 45%,#dedede 100%);border-right:1px solid #c2c2c2;border-bottom:1px solid #c8c8c8;box-shadow:inset 1px 0 0 #fff"></div>
  <div style="left:15px;top:316px;width:26px;height:18px;background:linear-gradient(#fff 0,#f6f6f6 45%,#dedede 100%);border-right:1px solid #c2c2c2;border-bottom:1px solid #c8c8c8;box-shadow:inset 1px 0 0 #fff"><span class="lbl" style="left:2px;top:2px">doc</span></div>
  <div style="left:41px;top:316px;width:26px;height:18px;background:linear-gradient(#fff 0,#f6f6f6 45%,#dedede 100%);border-right:1px solid #c2c2c2;border-bottom:1px solid #c8c8c8;box-shadow:inset 1px 0 0 #fff"><span class="lbl" style="left:2px;top:2px">pdf</span></div>
  <div style="left:67px;top:316px;width:56px;height:18px;background:linear-gradient(#fff 0,#f6f6f6 45%,#dedede 100%);border-right:1px solid #c2c2c2;border-bottom:1px solid #c8c8c8;box-shadow:inset 1px 0 0 #fff"><span class="lbl" style="left:2px;top:2px">Nº</span></div>
  <div style="left:123px;top:316px;width:46px;height:18px;background:linear-gradient(#fff 0,#f6f6f6 45%,#dedede 100%);border-right:1px solid #c2c2c2;border-bottom:1px solid #c8c8c8;box-shadow:inset 1px 0 0 #fff"><span class="lbl" style="left:2px;top:2px">Exerc.</span></div>
  <div style="left:169px;top:316px;width:344px;height:18px;background:linear-gradient(#fff 0,#f6f6f6 45%,#dedede 100%);border-right:1px solid #c2c2c2;border-bottom:1px solid #c8c8c8;box-shadow:inset 1px 0 0 #fff"><span class="lbl" style="left:2px;top:2px">Tipo</span></div>
  <div style="left:513px;top:316px;width:81px;height:18px;background:linear-gradient(#fff 0,#f6f6f6 45%,#dedede 100%);border-right:1px solid #c2c2c2;border-bottom:1px solid #c8c8c8;box-shadow:inset 1px 0 0 #fff"><span class="lbl" style="left:2px;top:2px">Data</span></div>
  <div style="left:594px;top:316px;width:344px;height:18px;background:linear-gradient(#fff 0,#f6f6f6 45%,#dedede 100%);border-right:1px solid #c2c2c2;border-bottom:1px solid #c8c8c8;box-shadow:inset 1px 0 0 #fff"><span class="lbl" style="left:2px;top:2px">Interressado</span></div>
  <div style="left:938px;top:316px;width:340px;height:18px;background:linear-gradient(#fff 0,#f6f6f6 45%,#dedede 100%);border-right:1px solid #c2c2c2;border-bottom:1px solid #c8c8c8;box-shadow:inset 1px 0 0 #fff"><span class="lbl" style="left:2px;top:2px">Autor</span></div>
  <div style="left:3px;top:334px;width:12px;height:17px;background:linear-gradient(#fbfbfb,#e2e2e2);border-right:1px solid #c2c2c2;border-bottom:1px solid #c2c2c2"><svg style="left:3px;top:3px" width="7" height="11" viewBox="0 0 7 11"><path d="M.5 0L6.500 5.500L.5 11z" fill="#000"/></svg></div>
  <div style="left:15px;top:334px;width:26px;height:17px;background:#8fc7c7;border-right:1px solid #e4f1f1"><svg style="left:7px;top:1px" width="12" height="16" viewBox="0 0 12 15" preserveAspectRatio="none"><path d="M.5.5h7l4 4v10H.5z" fill="#fff" stroke="#a9b9bc" stroke-width=".8"/><path d="M7.500.5l4 4h-4z" fill="#e3ecef" stroke="#a9b9bc" stroke-width=".5"/></svg></div>
  <div style="left:41px;top:334px;width:26px;height:17px;background:#8fc7c7;border-right:1px solid #e4f1f1"><svg style="left:7px;top:1px" width="12" height="16" viewBox="0 0 12 15" preserveAspectRatio="none"><path d="M.5.5h7l4 4v10H.5z" fill="#fff" stroke="#a9b9bc" stroke-width=".8"/><path d="M7.500.5l4 4h-4z" fill="#e3ecef" stroke="#a9b9bc" stroke-width=".5"/></svg></div>
  <div style="left:67px;top:334px;width:56px;height:17px;background:#8fc7c7;border-right:1px solid #e4f1f1"></div>
  <div style="left:123px;top:334px;width:46px;height:17px;background:#8fc7c7;border-right:1px solid #e4f1f1"></div>
  <div style="left:169px;top:334px;width:344px;height:17px;background:#8fc7c7;border-right:1px solid #e4f1f1"></div>
  <div style="left:513px;top:334px;width:81px;height:17px;background:#8fc7c7;border-right:1px solid #e4f1f1"></div>
  <div style="left:594px;top:334px;width:344px;height:17px;background:#8fc7c7;border-right:1px solid #e4f1f1"></div>
  <div style="left:938px;top:334px;width:339px;height:17px;background:#8fc7c7;border-right:1px solid #e4f1f1;border-right:none"></div>
  <div style="left:3px;top:614px;width:1292px;height:1px;background:#9c9c9c"></div>
  <div style="left:2px;top:614px;width:1px;height:88px;background:#fff"></div>
  <div style="left:3px;top:614px;width:1px;height:87px;background:#9c9c9c"></div>
  <div style="left:4px;top:615px;width:1px;height:85px;background:#fff"></div>
  <div style="left:4px;top:615px;width:825px;height:1px;background:#fff"></div>
  <div style="left:1295px;top:614px;width:1px;height:88px;background:#fff"></div>
  <div style="left:1296px;top:614px;width:1px;height:88px;background:#9c9c9c"></div>
  <span class="lbl" style="left:7px;top:616px;">Ementa:</span>
  <span class="lbl" style="left:437px;top:616px;">Observações</span>
  <div class="in" style="left:7px;top:630px;width:422px;height:65px;height:65px"><div style="right:1px;top:1px;width:17px;bottom:1px;background:#f0f0f0"><svg style="left:4px;top:7px" width="9" height="6" viewBox="0 0 9 6"><path d="M1 5L4.500 1.500L8 5" fill="none" stroke="#b4b4b4" stroke-width="1.500"/></svg><svg style="left:4px;bottom:7px" width="9" height="6" viewBox="0 0 9 6"><path d="M1 1L4.500 4.500L8 1" fill="none" stroke="#b4b4b4" stroke-width="1.500"/></svg></div></div>
  <div class="in" style="left:437px;top:630px;width:387px;height:65px;height:65px"><div style="right:1px;top:1px;width:17px;bottom:1px;background:#f0f0f0"><svg style="left:4px;top:7px" width="9" height="6" viewBox="0 0 9 6"><path d="M1 5L4.500 1.500L8 5" fill="none" stroke="#b4b4b4" stroke-width="1.500"/></svg><svg style="left:4px;bottom:7px" width="9" height="6" viewBox="0 0 9 6"><path d="M1 1L4.500 4.500L8 1" fill="none" stroke="#b4b4b4" stroke-width="1.500"/></svg></div></div>
  <div class="vsep" style="left:433px;top:615px;width:2px;height:85px;"></div>
  <div style="left:828px;top:615px;width:1px;height:85px;background:#9c9c98"></div>
  <div style="left:4px;top:700px;width:825px;height:1px;background:#9c9c98"></div>
  <div style="left:2px;top:701px;width:1295px;height:1px;background:#fff"></div>
  <div style="left:2px;top:702px;width:1295px;height:2px;background:linear-gradient(#8f8d80,#cfccbc)"></div>
  <div style="left:2px;top:723px;width:1295px;height:1px;background:#b4b1a1"></div>
  <div style="left:1px;top:724px;width:1297px;height:1px;background:#fff"></div>
  <div style="left:0px;top:725px;width:1299px;height:1px;background:#9c9c9c"></div>
  <svg style="left:1284px;top:712px" width="12" height="12" viewBox="0 0 12 12"><rect x="9" y="1" width="2" height="2" fill="#b8b4a2"/><rect x="5" y="5" width="2" height="2" fill="#b8b4a2"/><rect x="9" y="5" width="2" height="2" fill="#b8b4a2"/><rect x="1" y="9" width="2" height="2" fill="#b8b4a2"/><rect x="5" y="9" width="2" height="2" fill="#b8b4a2"/><rect x="9" y="9" width="2" height="2" fill="#b8b4a2"/></svg>
  <!--MAIN-END-->
</div>

<!-- STATUS BAR -->
<div id="status">
  <div class="sp" style="left:1px;width:142px;font-weight:bold;font-size:12px">www.fiorilli.com.br</div>
  <div class="sp" style="left:145px;width:88px;font-weight:bold;font-size:11px">Exercício 2016</div>
  <div class="sp" style="left:235px;width:98px;letter-spacing:-.7px">@NETOWEB</div>
  <div class="sp" style="left:335px;width:109px;letter-spacing:-.12px">26/07/2018 15:20:06</div>
  <div class="sp" style="left:446px;width:114px;text-align:left;padding-left:4px">Versão : 3.21.14.940</div>
  <div class="sp" style="left:562px;width:30px">738</div>
  <div class="sp" style="left:594px;width:80px;letter-spacing:-.2px">FireBird 2.1</div>
  <div class="sp" style="left:676px;width:760px;text-align:left;padding-left:3px;letter-spacing:-.65px">PREFEITURA MUNICIPAL DE MODELANDIA</div>
</div>

</div>
</body>
</html>
